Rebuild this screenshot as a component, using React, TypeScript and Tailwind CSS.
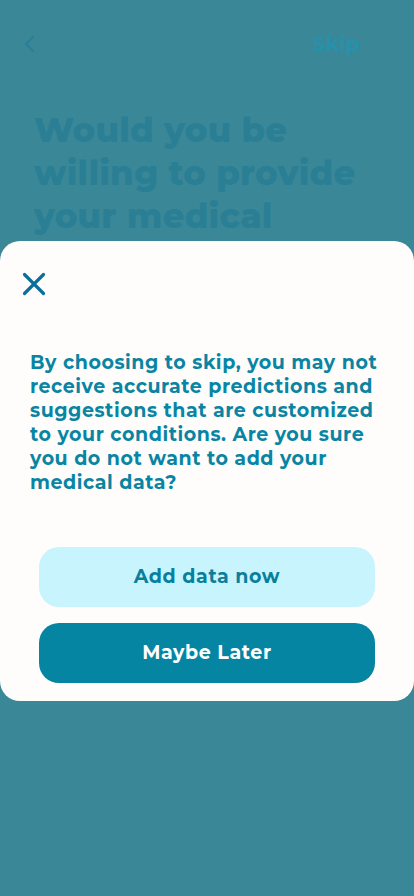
const font = { fontFamily: 'Montserrat, Inter, "Noto Sans", sans-serif' };

export default function App() {
  return (
    <div className="relative h-[896px] w-[414px] overflow-hidden bg-[#3a8798]" style={font}>
      {/* page behind the overlay */}
      <div className="flex items-center justify-between pl-[22px] pr-[54px] pt-[29px]">
        <svg width="16" height="22" viewBox="0 0 16 22" fill="none">
          <path d="M11 4L4 11L11 18" stroke="#2a8098" strokeWidth="2.2" strokeLinecap="round" strokeLinejoin="round" />
        </svg>
        <span className="text-[20px] font-bold tracking-[0.3px] text-[#2790ab]">Skip</span>
      </div>
      <h1 className="mt-[50px] px-[34px] text-[34px] font-extrabold leading-[43px] tracking-[0.2px] text-[#2a7f94]">
        Would you be willing to provide your medical data?
      </h1>

      {/* modal */}
      <div className="absolute left-0 top-[241px] flex h-[460px] w-[414px] flex-col rounded-[20px] bg-[#fffdfc]">
        <button className="ml-[22px] mt-[31px] h-6 w-6">
          <svg width="24" height="24" viewBox="0 0 24 24" fill="none">
            <path d="M2.5 2.5L21.5 21.5M21.5 2.5L2.5 21.5" stroke="#0b6f9b" strokeWidth="3.2" strokeLinecap="round" />
          </svg>
        </button>
        <p className="mt-[55px] pl-[30px] pr-[34px] text-[19px] font-bold leading-[24px] tracking-[0.55px] text-[#0985a3]">
          By choosing to skip, you may not receive accurate predictions and suggestions that are customized to your conditions. Are you sure you do not want to add your medical data?
        </p>
        <div className="mt-[52px] flex flex-col gap-4 px-[39px]">
          <button className="h-[60px] rounded-[20px] bg-[#c8f4fe] text-[19px] font-bold tracking-[0.6px] text-[#0a7f9c]">
            Add data now
          </button>
          <button className="h-[60px] rounded-[20px] bg-[#0685a3] text-[19px] font-bold tracking-[0.6px] text-white">
            Maybe Later
          </button>
        </div>
      </div>
    </div>
  );
}
